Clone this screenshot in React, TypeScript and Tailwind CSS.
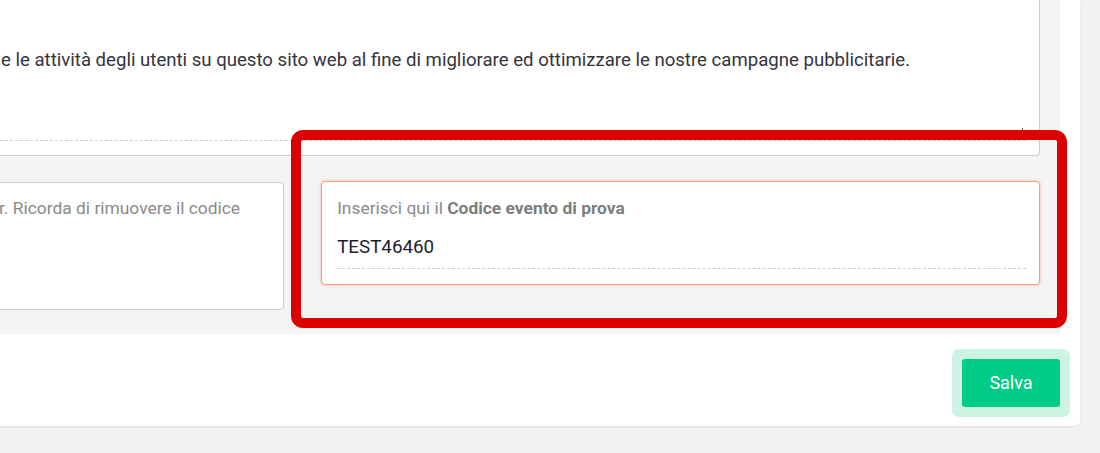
import React from "react";

export default function App() {
  return (
    <div
      className="relative w-[1100px] h-[453px] overflow-hidden bg-[#f2f2f2]"
      style={{ fontFamily: "Roboto, 'Noto Sans', Arial, sans-serif" }}
    >
      <div className="w-[1080px] h-[426px] bg-white rounded-br-[5px] shadow-[0_1px_2px_rgba(0,0,0,0.08)] flex flex-col">
        {/* gray section */}
        <div className="w-[1060px] h-[334px] bg-[#f4f4f4] pr-[20px] flex flex-col">
          {/* upper text box */}
          <div className="relative h-[156px] bg-white border border-t-0 border-l-0 border-[#cccccc] rounded-br-[4px] pt-[47px]">
            <p className="text-[18.6px] leading-[26px] text-[#34343c] whitespace-nowrap pl-[1px]">
              e le attività degli utenti su questo sito web al fine di migliorare ed ottimizzare le nostre campagne pubblicitarie.
            </p>
            <div className="mt-[67px] mr-[13px] border-b border-dashed border-[#cccccc]" />
            <div className="absolute right-[16px] top-[128px] w-[1px] h-[3px] bg-[#666666]" />
          </div>

          {/* lower row */}
          <div className="flex items-start mt-[25px] gap-[37px]">
            <div className="w-[285px] h-[128px] mt-[1px] bg-white border border-l-0 border-[#cccccc] rounded-r-[4px] pt-[13px] overflow-hidden">
              <p className="text-[17.4px] leading-[24px] text-[#8a8a8a] whitespace-nowrap -ml-[1px]">
                r. Ricorda di rimuovere il codice
              </p>
            </div>
            <div className="w-[721px] h-[104px] bg-white border border-[#f2a27e] rounded-[4px] shadow-[0_0_3px_rgba(245,140,90,0.6)] pl-[15px] pr-[13px] pt-[14px]">
              <p className="text-[17.4px] leading-[24px] text-[#8a8a8a] whitespace-nowrap">
                Inserisci qui il <span className="font-bold text-[#7d7d7d]">Codice evento di prova</span>
              </p>
              <p className="mt-[15px] text-[18.8px] leading-[24px] text-[#1e1e30]">TEST46460</p>
              <div className="mt-[9px] border-b border-dashed border-[#cccccc]" />
            </div>
          </div>
        </div>

        {/* bottom actions */}
        <div className="flex justify-end pr-[10px] pt-[15px]">
          <div className="rounded-[7px] bg-[#cdf3e3] p-[10px]">
            <button className="w-[98px] h-[48px] rounded-[3px] bg-[#00cc88] text-white text-[18px] leading-[24px]">
              Salva
            </button>
          </div>
        </div>
      </div>

      {/* red annotation highlight */}
      <div className="absolute left-[291px] top-[130px] w-[776px] h-[198px] border-[10px] border-[#dd0000] rounded-[12px] pointer-events-none" />
    </div>
  );
}
